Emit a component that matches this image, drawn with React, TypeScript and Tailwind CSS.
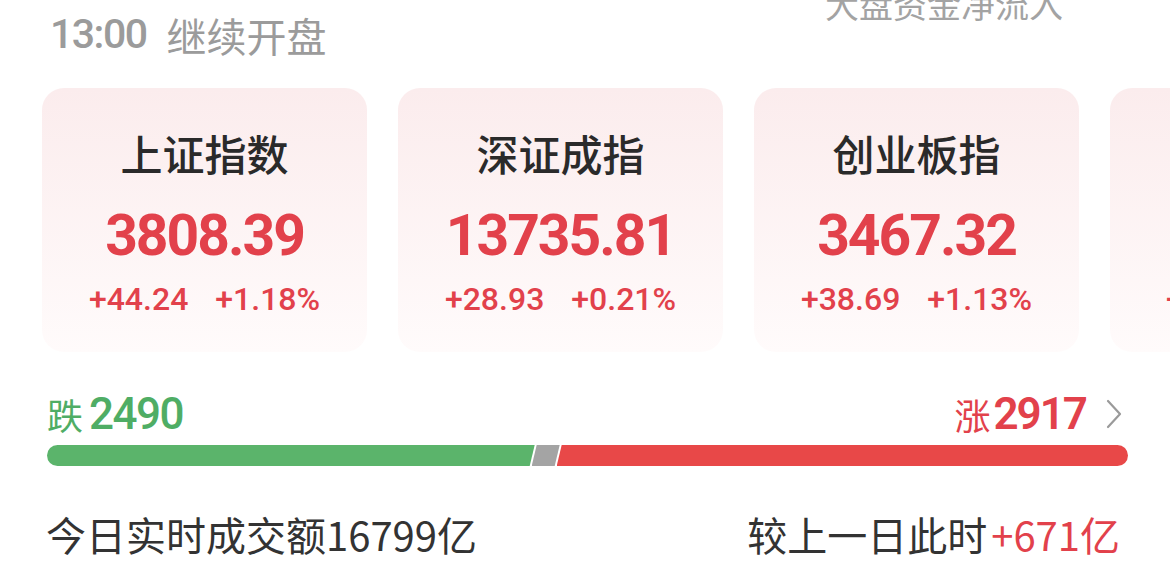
import { ReactNode } from "react"

const cjk = "font-['Noto_Sans_CJK_SC',sans-serif]"
const num = "font-['Roboto','Noto_Sans_CJK_SC',sans-serif]"

type Index = { name: string; value: string; change: string; pct: string }

const indices: Index[] = [
  { name: "上证指数", value: "3808.39", change: "+44.24", pct: "+1.18%" },
  { name: "深证成指", value: "13735.81", change: "+28.93", pct: "+0.21%" },
  { name: "创业板指", value: "3467.32", change: "+38.69", pct: "+1.13%" },
  { name: "科创50", value: "1062.81", change: "+9.30", pct: "+0.88%" },
]

function IndexCard({ item }: { item: Index }) {
  return (
    <div className="w-[325px] h-[264px] shrink-0 rounded-[22px] bg-gradient-to-b from-[#fbeced] to-[#fffbfb] flex flex-col items-center">
      <div className={`${cjk} mt-[41px] h-[48px] leading-[48px] text-[42px] font-medium text-[#2a2a2a]`}>
        {item.name}
      </div>
      <div className={`${num} mt-[29px] h-[60px] leading-[60px] text-[57px] font-bold tracking-[-2px] text-[#e2414b]`}>
        {item.value}
      </div>
      <div className={`${num} mt-[13px] flex gap-[27px] h-[40px] leading-[40px] text-[32px] font-medium text-[#e2414b]`}>
        <span>{item.change}</span>
        <span>{item.pct}</span>
      </div>
    </div>
  )
}

function Chevron() {
  return (
    <svg width="18" height="30" viewBox="0 0 18 30" fill="none">
      <polyline points="3,2 15,15 3,28" stroke="#9a9a9a" strokeWidth="2.2" strokeLinejoin="round" strokeLinecap="round" />
    </svg>
  )
}

function Row({ children }: { children: ReactNode }) {
  return <div className="flex items-center justify-between">{children}</div>
}

export default function App() {
  const down = 2490
  const up = 2917

  return (
    <div className="w-[1170px] h-[567px] overflow-hidden bg-white">
      {/* header */}
      <div className="h-[88px] flex justify-between pl-[50px] pr-[107px]">
        <div className="flex items-center gap-[20px] h-[70px] text-[#9b9b9b]">
          <span className={`${num} text-[41px] font-medium tracking-[-1.5px]`}>13:00</span>
          <span className={`${cjk} text-[40px]`}>继续开盘</span>
        </div>
        <div className={`${cjk} -mt-[16px] h-[40px] leading-[40px] text-[34px] text-[#a3a3a3]`}>大盘资金净流入</div>
      </div>

      {/* index cards */}
      <div className="flex gap-[31px] pl-[42px]">
        {indices.map((item) => (
          <IndexCard key={item.name} item={item} />
        ))}
      </div>

      {/* up / down breadth */}
      <div className="pl-[47px] pr-[47px] mt-[40px]">
        <Row>
          <div className="flex items-center h-[44px]">
            <span className={`${cjk} text-[36px] text-[#4fad65]`}>跌</span>
            <span className={`${num} ml-[6px] text-[44px] font-medium tracking-[-1.5px] text-[#4fad65]`}>{down}</span>
          </div>
          <div className="flex items-center h-[44px]">
            <span className={`${cjk} text-[36px] text-[#e2414b]`}>涨</span>
            <span className={`${num} ml-[3px] text-[44px] font-semibold tracking-[-2px] text-[#e2414b]`}>{up}</span>
            <span className="ml-[19px]">
              <Chevron />
            </span>
          </div>
        </Row>
        <div className="mt-[9px] w-[1081px] h-[21px] rounded-full overflow-hidden flex">
          <div
            className="h-full bg-[#5bb46b] [clip-path:polygon(0_0,100%_0,calc(100%-5px)_100%,0_100%)]"
            style={{ flexGrow: down, flexBasis: 0 }}
          />
          <div className="h-full w-[28px] -ml-[3px] shrink-0 bg-[#a4a4a4] [clip-path:polygon(5px_0,100%_0,calc(100%-5px)_100%,0_100%)]" />
          <div
            className="h-full -ml-[3px] bg-[#e84848] [clip-path:polygon(5px_0,100%_0,100%_100%,0_100%)]"
            style={{ flexGrow: up, flexBasis: 0 }}
          />
        </div>
      </div>

      {/* turnover */}
      <div className="mt-[46px] pl-[46px] pr-[50px]">
        <Row>
          <div className={`${cjk} text-[40px] text-[#333333] h-[44px] leading-[44px]`}>今日实时成交额16799亿</div>
          <div className={`${cjk} text-[40px] text-[#333333] h-[44px] leading-[44px]`}>
            较上一日此时<span className="ml-[4px] text-[#e2414b]">+671亿</span>
          </div>
        </Row>
      </div>
    </div>
  )
}
